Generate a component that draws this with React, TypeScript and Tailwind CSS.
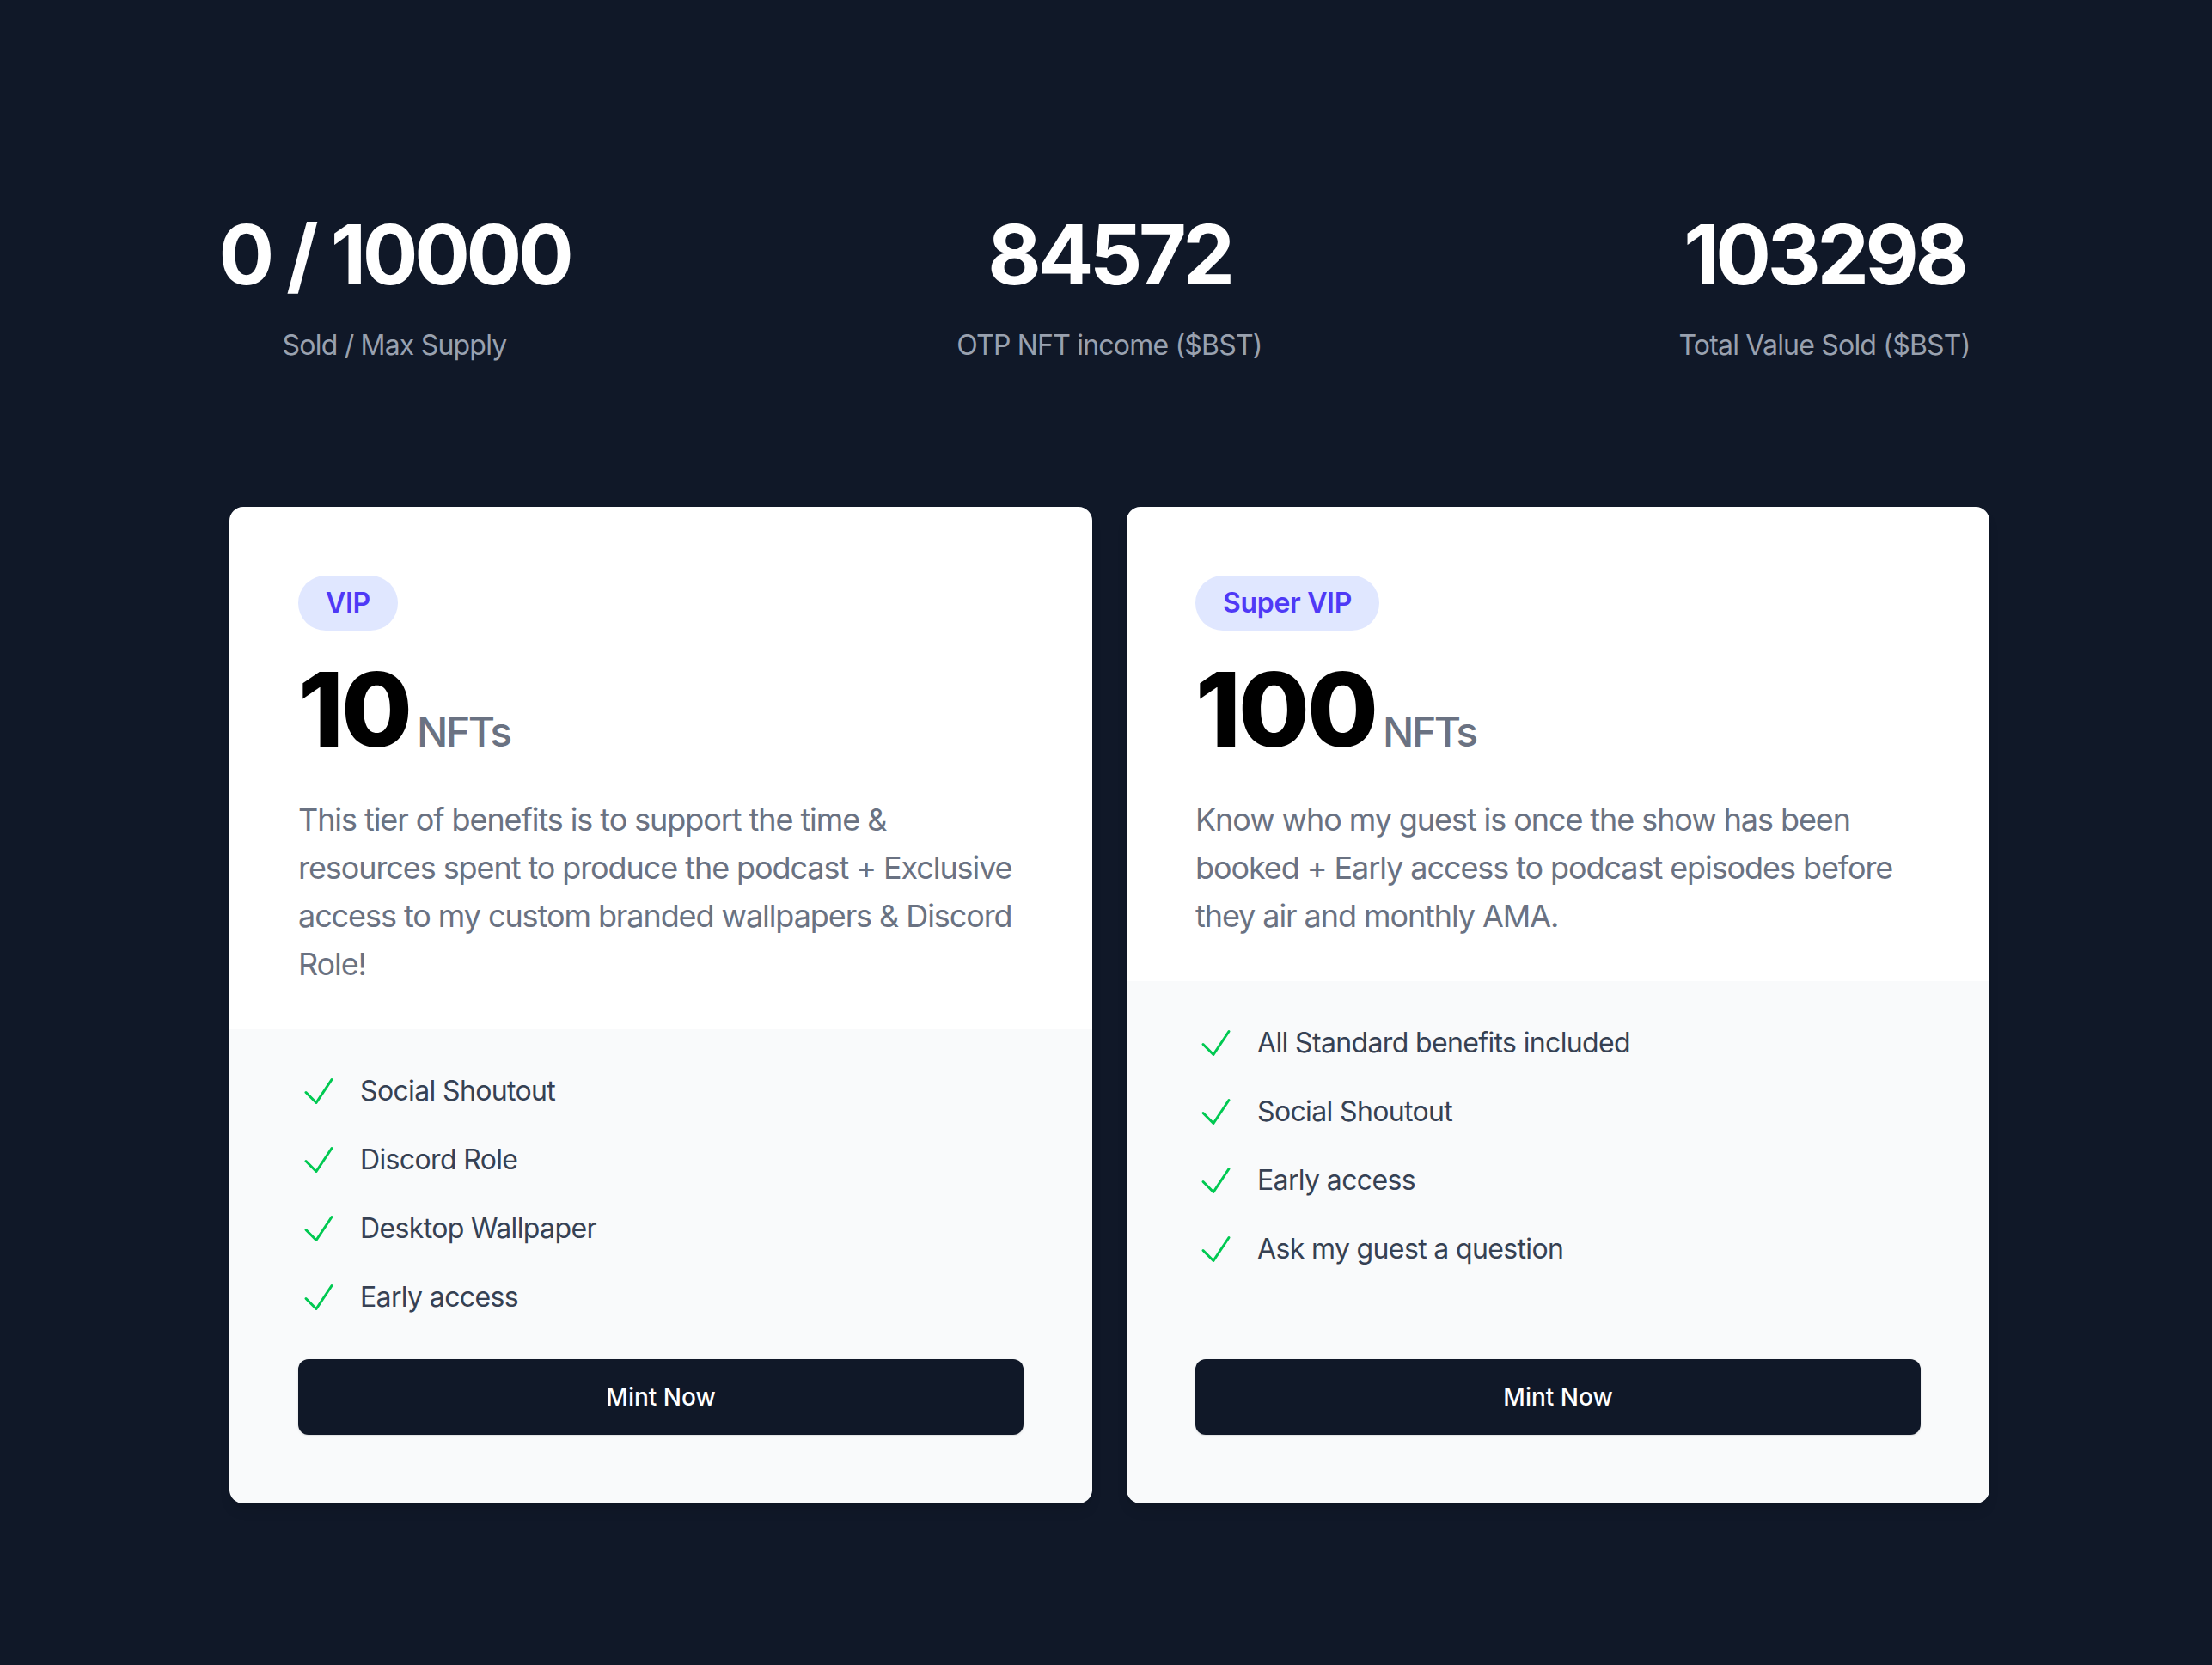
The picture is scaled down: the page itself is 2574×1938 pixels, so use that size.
const stats = [
  { value: "0 / 10000", label: "Sold / Max Supply" },
  { value: "84572", label: "OTP NFT income ($BST)" },
  { value: "103298", label: "Total Value Sold ($BST)" },
];

const tiers = [
  {
    name: "VIP",
    count: "10",
    description:
      "This tier of benefits is to support the time & resources spent to produce the podcast + Exclusive access to my custom branded wallpapers & Discord Role!",
    features: ["Social Shoutout", "Discord Role", "Desktop Wallpaper", "Early access"],
  },
  {
    name: "Super VIP",
    count: "100",
    description:
      "Know who my guest is once the show has been booked + Early access to podcast episodes before they air and monthly AMA.",
    features: [
      "All Standard benefits included",
      "Social Shoutout",
      "Early access",
      "Ask my guest a question",
    ],
  },
];

const CheckIcon = () => (
  <svg
    className="size-12 shrink-0 text-green-500"
    viewBox="0 0 24 24"
    fill="none"
    stroke="currentColor"
    strokeWidth={1.5}
    strokeLinecap="round"
    strokeLinejoin="round"
    aria-hidden="true"
  >
    <path d="m4.5 12.75 6 6 9-13.5" />
  </svg>
);

const App = () => {
  return (
    <div className="min-h-screen bg-gray-900 pl-2 pb-40 font-['Inter',sans-serif] antialiased">
      {/* stats */}
      <div className="mx-auto max-w-[2560px] px-16 pt-62">
        <dl className="grid grid-cols-3 gap-16 text-center">
          {stats.map((stat) => (
            <div key={stat.label} className="flex flex-col">
              <dt className="order-2 mt-[34px] text-[32px] leading-12 tracking-tight text-gray-400">
                {stat.label}
              </dt>
              <dd className="order-1 text-8xl leading-none font-bold tracking-[-0.045em] text-white">
                {stat.value}
              </dd>
            </div>
          ))}
        </dl>
      </div>

      {/* tiers */}
      <div className="mx-auto mt-[164px] grid max-w-[2048px] grid-cols-2 gap-10">
        {tiers.map((tier) => (
          <div key={tier.name} className="flex flex-col overflow-hidden rounded-2xl shadow-lg">
            <div className="bg-white p-20 pb-12">
              <span className="inline-flex rounded-full bg-indigo-100 px-8 py-2 text-[32px] leading-12 font-semibold tracking-[-0.01em] text-indigo-600">
                {tier.name}
              </span>
              <div className="mt-8 flex items-baseline text-[120px] leading-none font-extrabold tracking-tight text-black">
                {tier.count}
                <span className="ml-2 text-5xl font-medium tracking-[-0.05em] text-gray-500">NFTs</span>
              </div>
              <p className="mt-10 text-4xl leading-14 tracking-[-0.03em] text-gray-500">{tier.description}</p>
            </div>
            <div className="flex flex-1 flex-col justify-between gap-12 bg-gray-50 p-20 pt-12">
              <ul className="flex flex-col gap-8">
                {tier.features.map((feature) => (
                  <li key={feature} className="flex items-start">
                    <CheckIcon />
                    <p className="ml-6 text-[32px] leading-12 tracking-[-0.02em] text-gray-700">{feature}</p>
                  </li>
                ))}
              </ul>
              <button className="w-full rounded-xl bg-gray-900 py-6 text-[28px] leading-10 font-medium text-white shadow">
                Mint Now
              </button>
            </div>
          </div>
        ))}
      </div>
    </div>
  );
};

export default App;
